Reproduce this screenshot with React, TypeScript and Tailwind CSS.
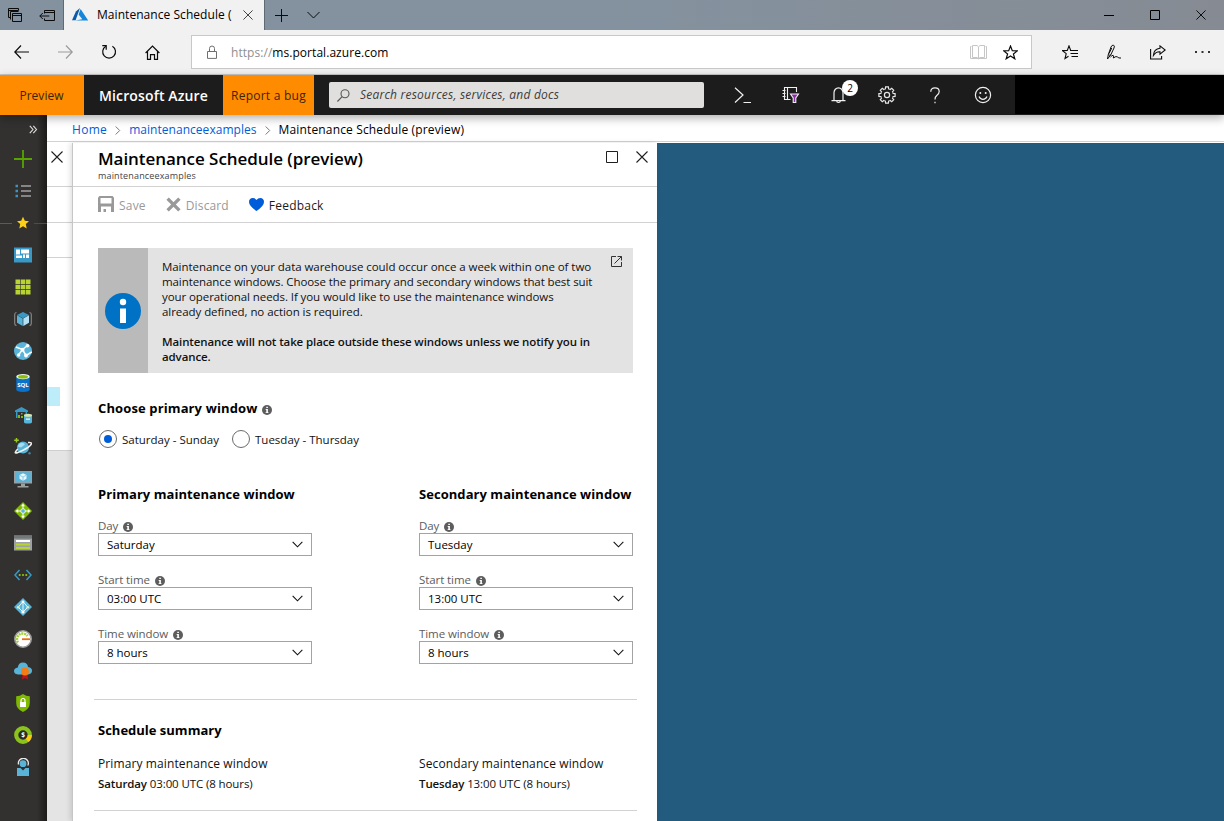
import type { ReactNode } from 'react';

/* ---------- shared icons ---------- */

function CloseIcon({ size, stroke = '#1f1f1f', width = 1.1 }: { size: number; stroke?: string; width?: number }) {
  return (
    <svg width={size} height={size} viewBox="0 0 12 12" className="block shrink-0" fill="none" stroke={stroke} strokeWidth={width}>
      <path d="M.5 .5 11.5 11.5M11.5 .5 .5 11.5" />
    </svg>
  );
}

function InfoDot() {
  return (
    <svg width="10" height="10" viewBox="0 0 10 10" className="block shrink-0">
      <circle cx="5" cy="5" r="5" fill="#5d5d5d" />
      <path d="M4.3 1.7h1.6v1.4H4.3zM3.7 4h2.2v3.2h.6v.9H3.6v-.9h.7V4.9h-.6z" fill="#fff" />
    </svg>
  );
}

/* ---------- browser frame ---------- */

function TabStrip() {
  return (
    <div className="flex h-[30px] shrink-0 bg-linear-to-r from-[#84919f] via-[#84929f] to-[#868b93]">
      <div className="flex w-16 items-center border-r border-[#5f6a75] pl-2">
        <svg width="14" height="14" viewBox="0 0 14 14" fill="none" stroke="#0b0b0b" className="block">
          <path d="M2.5 9.5h-2v-9h10v2M.5 2.5h10" />
          <path d="M2.5 11.5v-8h8" />
          <path d="M4.5 5.5h9v8h-9zM4.5 7.5h9" />
        </svg>
        <svg width="16" height="11" viewBox="0 0 16 11" fill="none" stroke="#0b0b0b" className="ml-[17px] block">
          <path d="M5.500 3.500v-3h10v10h-10v-2M5.500 2.500h10M.8 6h9.500M3.800 3 .8 6l3 3" />
        </svg>
      </div>
      <div className="flex w-[200px] items-center bg-[#f1f1f1] pl-2">
        <svg width="17" height="14" viewBox="0 0 17 14" className="block shrink-0">
          <path d="M8 0 3.900 3.500 0 12.300h3.600z" fill="#0a5ba8" />
          <path d="M8.600 1.100 6.600 6.500l3.700 4.700-7.200 1.300H16.200z" fill="#1485d8" />
        </svg>
        <div className="ml-2 w-[135px] overflow-hidden text-[12px] whitespace-nowrap tracking-[.05px] text-black">Maintenance Schedule (preview)</div>
        <div className="ml-[11px]"><CloseIcon size={10} stroke="#333" /></div>
      </div>
      <div className="flex items-center border-l border-[#5f6a75] pl-2.5">
        <svg width="13" height="13" viewBox="0 0 13 13" stroke="#0b0b0b" className="block"><path d="M6.500 0v13M0 6.500h13" /></svg>
        <svg width="13" height="8" viewBox="0 0 13 8" fill="none" stroke="#0b0b0b" className="ml-[19px] block"><path d="M.5 1 6.500 7l6-6" /></svg>
      </div>
      <div className="ml-auto flex items-center gap-9 pr-[18px]">
        <svg width="10" height="10" viewBox="0 0 10 10" stroke="#000" className="block"><path d="M0 5.500h10" /></svg>
        <svg width="10" height="10" viewBox="0 0 10 10" fill="none" stroke="#000" className="block"><path d="M.5 .5h9v9h-9z" /></svg>
        <CloseIcon size={10} stroke="#000" />
      </div>
    </div>
  );
}

const STAR = 'M7.500 1 9.300 5.700l5 .2-3.900 3.100 1.400 4.800-4.300-2.800-4.300 2.800 1.400-4.800L.7 5.900l5-.2z';

function NavBar() {
  return (
    <div className="flex h-[45px] shrink-0 items-center border-b border-[#c9c9c9] bg-[#f1f1f1] pl-3.5">
      <svg width="15" height="14" viewBox="0 0 15 14" fill="none" stroke="#0b0b0b" strokeWidth="1.200" className="block"><path d="M7 .5.8 7 7 13.500M.8 7H15" /></svg>
      <svg width="15" height="14" viewBox="0 0 15 14" fill="none" stroke="#9b9b9b" strokeWidth="1.200" className="ml-[29px] block"><path d="M8 .5 14.200 7 8 13.500M14.200 7H0" /></svg>
      <svg width="16" height="16" viewBox="0 0 16 16" fill="none" stroke="#0b0b0b" strokeWidth="1.200" className="ml-[28px] block">
        <path d="M4.800 2.300a6.400 6.400 0 1 0 6.600 0" />
        <path d="M1.300 1.700h3.900v4" />
      </svg>
      <svg width="15" height="15" viewBox="0 0 15 15" fill="none" stroke="#0b0b0b" strokeWidth="1.200" className="ml-7 block">
        <path d="M.6 8 7.500 1l6.900 7M2.500 6.500v7.900h3V9.600h4v4.800h3V6.500" />
      </svg>
      <div className="ml-[31px] flex h-[34px] w-[841px] items-center border border-[#c8c8c8] bg-white pl-3.5">
        <svg width="12" height="14" viewBox="0 0 12 14" fill="none" stroke="#6f6f6f" className="block"><path d="M1.500 6.500h9v6.900h-9zM3.500 6.500V3.500a2.500 2.500 0 0 1 5 0v3" /></svg>
        <div className="mt-px ml-[13px] pt-px text-[12px] tracking-[.05px] text-[#8f8f8f]">https://<span className="text-black">ms.portal.azure.com</span></div>
        <div className="ml-auto flex items-center gap-4 pr-[13px]">
          <svg width="17" height="15" viewBox="0 0 17 15" fill="none" stroke="#c6c6c6" className="block"><path d="M1.500 1.500h-1v12h16v-12h-1M8.500 2v12M2.500.5v12H7l1.500 1.300L10 12.500h4.500V.5H10L8.500 1.800 7 .5z" /></svg>
          <svg width="15" height="15" viewBox="0 0 15 15" fill="none" stroke="#0b0b0b" strokeWidth="1.200" className="block"><path d={STAR} /></svg>
        </div>
      </div>
      <div className="flex items-center pl-[30px]">
        <svg width="16" height="15" viewBox="0 0 16 15" fill="none" stroke="#0b0b0b" strokeWidth="1.100" className="block">
          <path d="M10 5.500H8.700L7 .9 5.300 5.500l-4.800.1L4.200 8.700 3 13.500l3.500-2.300M8 5.500h8M8.500 8.500H16M9.500 11.500H16" />
        </svg>
        <svg width="16" height="16" viewBox="0 0 16 16" fill="none" stroke="#0b0b0b" strokeWidth="1" className="ml-[28px] block">
          <path d="M1.500 15 2.300 10.500 5 3Q6 .8 7.500 1.200T8 4L4.800 10.800 1.500 15M2.300 10.500q1.200 1.200 2.500.3M3 9.500 5.800 4M4.500 13q1.500-1.700 2.600-1.700t.2 2.700q3.200-2.400 4.200-1t3.500 1" />
        </svg>
        <svg width="16" height="15" viewBox="0 0 16 15" fill="none" stroke="#0b0b0b" strokeWidth="1.100" className="ml-[28px] block">
          <path d="M.6 4v10h11v-3M10 .9 15.200 5 10 9.200V6.800Q6 6.500 3.400 10.500 3.800 4 10 3.300z" />
        </svg>
        <svg width="15" height="4" viewBox="0 0 15 4" className="ml-[29px] block"><path d="M0 1h2v2H0zM6.500 1h2v2h-2zM13 1h2v2h-2z" fill="#333" /></svg>
      </div>
    </div>
  );
}

/* ---------- portal top bar ---------- */

const GEAR_TEETH = [0, 45, 90, 135, 180, 225, 270, 315];

function GearIcon() {
  return (
    <svg width="18" height="18" viewBox="0 0 18 18" fill="none" stroke="#e6e6e6" strokeWidth="1.200" className="block">
      {GEAR_TEETH.map((deg) => (
        <path key={deg} d="M6.600 3.200 7.400 2.900 7.600.9h2.800l.2 2 .8.300" transform={`rotate(${deg} 9 9)`} />
      ))}
      <circle cx="9" cy="9" r="2.600" />
    </svg>
  );
}

function PortalBar() {
  return (
    <div className="relative z-20 flex h-10 shrink-0 items-center bg-[#1c1c1c] shadow-[0_3px_9px_rgba(0,0,0,.32)]">
      <div className="flex h-full w-[84px] items-center justify-center bg-[#ff8c00] pt-0.5 pr-px text-[12px] tracking-[.03px] text-[#3b2503]">Preview</div>
      <div className="w-[139px] pl-[15px] text-[14px] font-semibold tracking-[.14px] text-white">Microsoft Azure</div>
      <div className="flex h-full w-[91px] items-center justify-center bg-[#ff8c00] pt-0.5 text-[12px] whitespace-nowrap tracking-[.25px] text-[#3b2503]">Report a bug</div>
      <div className="ml-[15px] flex h-[26px] w-[375px] items-center rounded-[2px] bg-[#e0dfdd] pl-2">
        <svg width="13" height="13" viewBox="0 0 13 13" fill="none" stroke="#555" strokeWidth="1.100" className="block"><circle cx="8" cy="4.800" r="4" /><path d="M5.100 7.700.4 12.500" /></svg>
        <div className="ml-2.5 text-[12px] tracking-[.22px] text-[#3c3c3c] italic">Search resources, services, and docs</div>
      </div>
      <div className="flex items-center pl-[30px]">
        <svg width="18" height="17" viewBox="0 0 18 17" fill="none" stroke="#f0f0f0" strokeWidth="1.200" className="block"><path d="M1 .8 9 8 1 15.500M9.500 15.500H17" /></svg>
        <svg width="18" height="18" viewBox="0 0 18 18" fill="none" stroke="#f0f0f0" strokeWidth="1.100" className="ml-[30px] block">
          <path d="M14.500 6V1.500h-12v12h6M5.500 1.500v12M.5 4.500h3M.5 7.500h3M.5 10.500h3" />
          <path d="M8.500 8h8l-2.700 4v4.500h-2.600V12z" fill="#8b2fa8" />
        </svg>
        <div className="relative ml-[31px]">
          <svg width="18" height="18" viewBox="0 0 18 18" fill="none" stroke="#f0f0f0" strokeWidth="1.200" className="block">
            <path d="M3 14.500V6.800a4.500 5 0 0 1 9 0v7.700M.5 14.600h14M5.700 15a1.800 1.500 0 0 0 3.600 0" />
          </svg>
          <div className="absolute -top-[6px] left-[11px] flex size-4 items-center justify-center rounded-full bg-white text-[10px] leading-none text-black">2</div>
        </div>
        <div className="ml-[29px]"><GearIcon /></div>
        <svg width="10" height="17" viewBox="0 0 10 17" fill="none" stroke="#f0f0f0" strokeWidth="1.200" className="ml-[34px] block"><path d="M.8 4.800Q.8.8 5 .8t4.200 3.800q0 2-2.200 3.700T5 12.500M5 14.700v1.600" /></svg>
        <svg width="18" height="18" viewBox="0 0 18 18" fill="none" stroke="#f0f0f0" strokeWidth="1.200" className="ml-[34px] block">
          <circle cx="9" cy="9" r="7.600" />
          <path d="M5 10.500q1.200 2.800 4 2.800t4-2.800" />
          <circle cx="6.300" cy="6.900" r="1" fill="#f0f0f0" stroke="none" /><circle cx="11.700" cy="6.900" r="1" fill="#f0f0f0" stroke="none" />
        </svg>
      </div>
      <div className="ml-auto h-[39px] w-[209px] self-start bg-black" />
    </div>
  );
}

/* ---------- sidebar ---------- */

const SIDE_ICONS: ReactNode[] = [
  <path key="add" d="M9 0v18M0 9h18" stroke="#57a300" strokeWidth="1.800" />,
  <g key="list"><path d="M1.500 4h2.500M1.500 9h2.500M1.500 14h2.500" stroke="#3f93bf" strokeWidth="2.400" /><path d="M7 4h10M7 9h10M7 14h10" stroke="#858585" strokeWidth="2.200" /></g>,
  <path key="fav" d="m9 2.800 1.800 4 4.200.4-3.200 2.900.9 4.300L9 12.200l-3.700 2.200.9-4.300L3 7.200l4.200-.4z" fill="#fcd116" />,
  <g key="dash"><path d="M0 1.500h18v15H0z" fill="#3999c6" /><path d="M2 3.500h4v5H2zM7 3.500h8v4H7zM2 9.500h6v2.500H2zM9 8.500h2V12H9zM12 8.500h3V12h-3z" fill="#fff" /></g>,
  <path key="grid" d="M1.500 1.500h4.600v4.600H1.500zM6.700 1.500h4.600v4.600H6.700zM11.900 1.500h4.600v4.600h-4.600zM1.500 6.700h4.600v4.600H1.500zM6.700 6.700h4.600v4.600H6.700zM11.900 6.700h4.600v4.600h-4.600zM1.500 11.900h4.600v4.600H1.500zM6.700 11.900h4.600v4.600H6.700zM11.900 11.900h4.600v4.600h-4.600z" fill="#b8d432" />,
  <g key="cube"><path d="M2.500 2.500Q.7 2.500.7 4.500v9q0 2 1.800 2M15.500 2.500q1.800 0 1.800 2v9q0 2-1.800 2" stroke="#8a8a8a" strokeWidth="1.100" fill="none" /><path d="M9 2l6 3-6 3.200L3 5z" fill="#3999c6" /><path d="M3 5.300 8.700 8.500V16L3 12.700z" fill="#59b4d9" /><path d="M15 5.300 9.300 8.500V16l5.700-3.300z" fill="#b3e0f2" /></g>,
  <g key="web"><circle cx="9" cy="9" r="9" fill="#59b4d9" /><path d="M1.800 5 8.500 7.500l5-4M8.500 7.500l3.500 6M8.500 7.500 4.500 13M12 13.500l5.800-3.500" stroke="#fff" strokeWidth="1.500" fill="none" /><circle cx="8.500" cy="7.700" r="2" fill="#fff" /><circle cx="4.600" cy="13" r="1.700" fill="#fff" /><circle cx="13.500" cy="3.700" r="1.800" fill="#fff" /><circle cx="12" cy="13.500" r="1.900" fill="#fff" /></g>,
  <g key="sql"><path d="M2.300 2.700v12.600Q2.300 18 9 18t6.700-2.700V2.700z" fill="#0a72c8" /><ellipse cx="9" cy="2.700" rx="6.700" ry="2.600" fill="#e9f5e0" /><ellipse cx="9" cy="2.700" rx="5" ry="1.800" fill="#8cbd0c" /><text x="9" y="12.800" textAnchor="middle" fontSize="6" fontWeight="700" fill="#fff">SQL</text></g>,
  <g key="dw"><path d="M1 4.500 7.500 1 14 4.500V6H1z" fill="#3999c6" /><path d="M2 6h1.500v6H2zM11.500 6H13v2h-1.500z" fill="#3999c6" /><path d="M4 9h2v3H4zM7 7h1.500v1.500H7zM7 10h2v2H7z" fill="#7fba00" /><path d="M10 9v7q0 1.500 4 1.500t4-1.500V9z" fill="#59b4d9" /><ellipse cx="14" cy="9.200" rx="4" ry="1.500" fill="#d5e8b0" /><path d="M12 12.500h4v1.300h-4z" fill="#e8f6fb" /></g>,
  <g key="cosmos"><circle cx="9" cy="9.500" r="6" fill="#59b4d9" /><path d="M5 6q4-2.500 6 .5l-4 3-3.500-1z" fill="#a5dcf0" /><path d="M14 4.500q4.500-.5 3 2T9.500 12 1.800 15t2-4" stroke="#f2f2f2" strokeWidth="1.500" fill="none" /><path d="M2.500 0v4.500M.2 2.300h4.600" stroke="#9bcb1c" strokeWidth="1.500" /><circle cx="15.500" cy="15.300" r="1.200" fill="#2d86c0" /></g>,
  <g key="vm"><path d="M0 1h18v12.500H0z" fill="#9a9fa2" /><path d="M1.300 2.200h15.400v10H1.300z" fill="#59b4d9" /><path d="m9 3.300 3.500 1.800v3.700L9 10.700 5.500 8.800V5.100z" fill="#e9f6fb" /><path d="M9 7v3.500M5.800 5.300 9 7l3.200-1.700" stroke="#59b4d9" strokeWidth=".6" fill="none" /><path d="M7 13.500h4V16H7zM3.500 16h11v1.500h-11z" fill="#9a9fa2" /></g>,
  <g key="lb"><path d="m9 0 9 9-9 9-9-9z" fill="#7fba00" strokeLinejoin="round" /><path d="M9 3v12M3 9h12" stroke="#fff" strokeWidth="1" /><path d="m9 1.500 2 2.700H7zM9 16.500l2-2.700H7zM1.500 9l2.700-2v4zM16.500 9l-2.700-2v4z" fill="#fff" /><circle cx="9" cy="9" r="2.300" fill="#59b4d9" stroke="#fff" strokeWidth=".8" /></g>,
  <g key="storage"><path d="M0 1.500h18v15H0z" fill="#9da1a3" /><path d="M0 1.500h18v3.200H0z" fill="#737779" /><path d="M2 6h14v2H2z" fill="#fff" /><path d="M2 9.500h14v2H2zM2 13h14v2H2z" fill="#b8d432" /></g>,
  <g key="vnet"><path d="M5.500 4 1 9l4.500 5M12.500 4 17 9l-4.500 5" stroke="#3999c6" strokeWidth="1.500" fill="none" /><circle cx="5.700" cy="9" r="1.100" fill="#8ec610" /><circle cx="9" cy="9" r="1.100" fill="#8ec610" /><circle cx="12.300" cy="9" r="1.100" fill="#8ec610" /></g>,
  <g key="aad"><path d="m9 0 9 9-9 9-9-9z" fill="#59b4d9" /><path d="M9 3.500v11M9 3.500 4.200 9.200 9 14l4.800-4.800z" stroke="#e8f6fb" strokeWidth="1" fill="none" /><circle cx="9" cy="3.800" r="1.400" fill="#fff" /><circle cx="4.200" cy="9.300" r="1.300" fill="#dff0b5" /><circle cx="13.800" cy="9.300" r="1.300" fill="#dff0b5" /><circle cx="9" cy="14" r="1.600" fill="#fff" /></g>,
  <g key="monitor"><circle cx="9" cy="9" r="8.200" fill="#fff" stroke="#9b9b9b" strokeWidth="1.600" /><path d="M4 12.500A5.500 5.500 0 0 1 13.500 6" stroke="#a6ce39" strokeWidth="2.500" strokeDasharray="2 .7" fill="none" /><path d="M8 8.300h8v1.800H8z" fill="#f06a10" /></g>,
  <g key="advisor"><path d="M4 12.500Q0 12 0 9t3.800-3.500Q4.500.5 9 .5T14 5q4 .5 4 3.700T14 12.500z" fill="#59b4d9" /><path d="M8.500 11.500 8 17.500l3-1.600 3 1.600-.5-6z" fill="#ba141a" /><circle cx="11" cy="9.500" r="3.900" fill="#f57c12" /></g>,
  <g key="security"><path d="M2.200 2.200Q6 2.200 9 0q3 2.200 6.800 2.200V9q0 6-6.800 9-6.800-3-6.800-9z" fill="#7fba00" /><path d="M6 8h6v5H6z" fill="#fff" /><path d="M7 8V6.500a2 2 0 0 1 4 0V8" stroke="#fff" strokeWidth="1.200" fill="none" /></g>,
  <g key="cost"><circle cx="9" cy="9" r="6.800" fill="#2a2a28" stroke="#8cc21c" strokeWidth="4.200" /><path d="M15.800 9a6.800 6.800 0 0 1-2.700 5.400" stroke="#fcc90f" strokeWidth="4.200" fill="none" /><text x="9" y="11.300" textAnchor="middle" fontSize="6.500" fontWeight="700" fill="#fff">$</text></g>,
  <g key="help"><path d="M4.500 6.500a5 5 0 1 1 9.300 1" stroke="#e8e8e8" strokeWidth="1.300" fill="none" /><circle cx="9" cy="5.700" r="3.400" fill="#59b4d9" /><path d="M3 10h3.500L9 12.500l2.500-2.500H15v8H3z" fill="#59b4d9" /></g>,
];

function Sidebar() {
  return (
    <nav className="w-[47px] shrink-0 bg-[linear-gradient(to_right,#33312f_0,#33312f_37px,#1d1c1a_47px)]">
      <div className="flex h-7 items-center pl-[29px]">
        <svg width="9" height="9" viewBox="0 0 9 9" fill="none" stroke="#e0e0e0" strokeWidth="1.100" className="block"><path d="m.8.8 3.200 3.700L.8 8.200M4.300.8l3.200 3.700-3.200 3.700" /></svg>
      </div>
      {SIDE_ICONS.map((icon, i) => (
        <div key={i} className="flex h-8 items-center">
          <div className={i === 2 ? 'h-px w-3 bg-[#5d5b59]' : 'w-3'} />
          <svg width="18" height="18" viewBox="0 0 18 18" className="ml-0.5 block shrink-0">{icon}</svg>
          <div className={i === 2 ? 'ml-0.5 h-px flex-1 bg-[#4e4c4a]' : 'hidden'} />
        </div>
      ))}
    </nav>
  );
}

/* ---------- content ---------- */

function Crumb({ children }: { children: ReactNode }) {
  return <span className="text-[#015cda]">{children}</span>;
}

function CrumbSep() {
  return <svg width="6" height="9" viewBox="0 0 6 9" fill="none" stroke="#777" className="mt-px block"><path d="m.7.5 4 4-4 4" /></svg>;
}

function PreviousBlade() {
  return (
    <div className="flex w-[25px] shrink-0 flex-col bg-[#e4e4e4]">
      <div className="flex h-11 items-start border-b border-[#d2d2d2] bg-white pt-2 pl-1"><CloseIcon size={12} /></div>
      <div className="h-9 border-b border-[#d2d2d2] bg-white" />
      <div className="h-[35px] border-b border-[#d2d2d2] bg-white" />
      <div className="h-[193px] border-b border-[#cfcfcf] bg-white pt-[129px]">
        <div className="h-[19px] w-[13px] bg-[#bdedf9]" />
      </div>
    </div>
  );
}

function Toolbar() {
  return (
    <div className="flex h-9 items-center border-b border-[#d2d2d2] pl-[25px] text-[12px]">
      <svg width="16" height="16" viewBox="0 0 16 16" className="mb-px block"><path d="M1.500 0h13L16 1.500V16H0V1.500z" fill="#999" /><path d="M2.500 2h11v5.500h-11zM3 10.500h10V16H8v-3H5.500v3H3z" fill="#fff" /></svg>
      <span className="mt-0.5 ml-[5px] tracking-[.2px] text-[#999]">Save</span>
      <svg width="15" height="15" viewBox="0 0 14 14" className="mb-px ml-5 block"><path d="m1.500 1.500 11 11M12.500 1.500l-11 11" stroke="#999" strokeWidth="3.200" /></svg>
      <span className="mt-0.5 ml-[5px] tracking-[.13px] text-[#999]">Discard</span>
      <svg width="15" height="13" viewBox="0 0 15 13" className="ml-5 block"><path d="M7.500 13Q0 8 0 4 0 .3 3.700 0q2.500 0 3.800 2Q8.800 0 11.300 0 15 .3 15 4q0 4-7.500 9z" fill="#015cda" /></svg>
      <span className="mt-0.5 ml-[5px] tracking-[.22px] text-[#1c1c1c]">Feedback</span>
    </div>
  );
}

function InfoBox() {
  return (
    <div className="flex h-[125px] w-[535px] bg-[#e3e3e3]">
      <div className="flex w-[50px] shrink-0 items-center justify-center bg-[#bababa]">
        <svg width="36" height="36" viewBox="0 0 36 36" className="block"><circle cx="18" cy="18" r="18" fill="#0072c6" /><circle cx="18" cy="9" r="3.200" fill="#fff" /><path d="M15 15.500h6V30h-6z" fill="#fff" /></svg>
      </div>
      <div className="w-[444px] shrink-0 pt-[11px] pl-3.5 text-[11.5px] leading-[15px] whitespace-nowrap text-[#111]">
        <p className="tracking-[-.06px]">
          Maintenance on your data warehouse could occur once a week within one of two<br />
          <span className="tracking-[-.09px]">maintenance windows. Choose the primary and secondary windows that best suit</span><br />
          <span className="tracking-[-.08px]">your operational needs. If you would like to use the maintenance windows</span><br />
          already defined, no action is required.
        </p>
        <p className="mt-[15px] font-semibold tracking-[-.108px]">
          Maintenance will not take place outside these windows unless we notify you in<br />
          advance.
        </p>
      </div>
      <svg width="11" height="11" viewBox="0 0 11 11" fill="none" stroke="#333" className="mt-2 ml-[19px] block"><path d="M5 .5H.5v10h10V6M6.500.5h4v4M10.500.5 3.500 7.500" /></svg>
    </div>
  );
}

function Radio({ label, checked = false }: { label: string; checked?: boolean }) {
  return (
    <label className="flex items-center gap-[5px] text-[11.5px] text-[#111]">
      <span className="flex size-[18px] items-center justify-center rounded-full border border-[#6b6b6b] bg-white">
        {checked && <span className="size-2 rounded-full bg-[#015cda]" />}
      </span>
      <span className="pt-0.5">{label}</span>
    </label>
  );
}

function SelectField({ label, value }: { label: string; value: string }) {
  return (
    <div className="mb-2.5 flex h-11 w-[214px] flex-col">
      <div className="flex h-[21px] items-center gap-[5px] pt-[7px] text-[11.5px] tracking-[-.08px] text-[#5c5c5c]">
        <span>{label}</span>
        <span className="mt-px"><InfoDot /></span>
      </div>
      <div className="flex h-[23px] items-center justify-between border border-[#a3a3a3] bg-white pr-2 pl-2 text-[11.5px] text-black">
        <span>{value}</span>
        <svg width="11" height="7" viewBox="0 0 12 7" fill="none" stroke="#111" strokeWidth="1.200" className="block"><path d="m.7.7 5.300 5.300L11.300.7" /></svg>
      </div>
    </div>
  );
}

type WindowInfo = { title: string; day: string; start: string };

const WINDOWS: WindowInfo[] = [
  { title: 'Primary maintenance window', day: 'Saturday', start: '03:00 UTC' },
  { title: 'Secondary maintenance window', day: 'Tuesday', start: '13:00 UTC' },
];

function ScheduleBlade() {
  return (
    <section className="relative z-10 flex w-[585px] shrink-0 flex-col border-l border-[#c6c6c6] bg-white shadow-[-2px_0_5px_rgba(0,0,0,.12)]">
      <header className="flex h-11 shrink-0 border-b border-[#d2d2d2] pl-[25px]">
        <div>
          <h1 className="mt-1 text-[17px] leading-6 font-semibold tracking-[-.05px] text-black">Maintenance Schedule (preview)</h1>
          <p className="-mt-[1px] text-[9px] leading-[11px] tracking-[.157px] text-[#444]">maintenanceexamples</p>
        </div>
        <div className="mt-2 mr-[9px] ml-auto flex gap-[18px]">
          <svg width="12" height="12" viewBox="0 0 12 12" fill="none" stroke="#1f1f1f" className="block"><path d="M.5.5h11v11H.5z" /></svg>
          <CloseIcon size={12} />
        </div>
      </header>
      <Toolbar />
      <div className="pt-[25px] pl-[25px]">
        <InfoBox />
        <div className="mt-[25px] flex h-5 items-center gap-[5px]">
          <h2 className="pt-0.5 text-[13px] font-bold tracking-[.12px] text-black">Choose primary window</h2>
          <span className="mt-1"><InfoDot /></span>
        </div>
        <div className="mt-3 ml-[1px] flex h-[17px] items-center gap-[13px]">
          <Radio label="Saturday - Sunday" checked />
          <Radio label="Tuesday - Thursday" />
        </div>
        <div className="mt-[37px] flex gap-[107px]">
          {WINDOWS.map((w) => (
            <div key={w.title} className="w-[214px]">
              <h2 className="mb-2 h-5 text-[13px] leading-5 font-bold whitespace-nowrap tracking-[.05px] text-black">{w.title}</h2>
              <SelectField label="Day" value={w.day} />
              <SelectField label="Start time" value={w.start} />
              <SelectField label="Time window" value="8 hours" />
            </div>
          ))}
        </div>
      </div>
      <div className="mt-[25px] ml-[21px] h-[112px] w-[543px] shrink-0 border-y border-[#d2d2d2] pt-5 pl-1">
        <h2 className="h-5 text-[13px] leading-5 font-bold text-black">Schedule summary</h2>
        <div className="mt-[14px] flex gap-[107px] text-[#111]">
          {WINDOWS.map((w) => (
            <div key={w.title} className="w-[214px] whitespace-nowrap">
              <p className="text-[12px] leading-5 tracking-[.11px]">{w.title}</p>
              <p className="text-[11.5px] leading-[19px] tracking-[-.11px]"><span className="font-semibold">{w.day}</span> {w.start} (8 hours)</p>
            </div>
          ))}
        </div>
      </div>
    </section>
  );
}

export default function App() {
  return (
    <div className="flex h-[821px] w-[1224px] flex-col overflow-hidden bg-white font-['Open_Sans','Noto_Sans',sans-serif]">
      <TabStrip />
      <NavBar />
      <PortalBar />
      <div className="flex min-h-0 flex-1">
        <Sidebar />
        <main className="flex min-w-0 flex-1 flex-col">
          <div className="flex h-[27px] shrink-0 items-center gap-2 border-b border-[#d2d2d2] pt-1 pl-[25px] text-[12px] tracking-[.15px]">
            <Crumb><span className="tracking-[.3px]">Home</span></Crumb>
            <CrumbSep />
            <Crumb><span className="tracking-[.04px]">maintenanceexamples</span></Crumb>
            <CrumbSep />
            <span className="text-black">Maintenance Schedule (preview)</span>
          </div>
          <div className="mt-px flex min-h-0 flex-1 bg-[#235b7e]">
            <PreviousBlade />
            <ScheduleBlade />
          </div>
        </main>
      </div>
    </div>
  );
}
